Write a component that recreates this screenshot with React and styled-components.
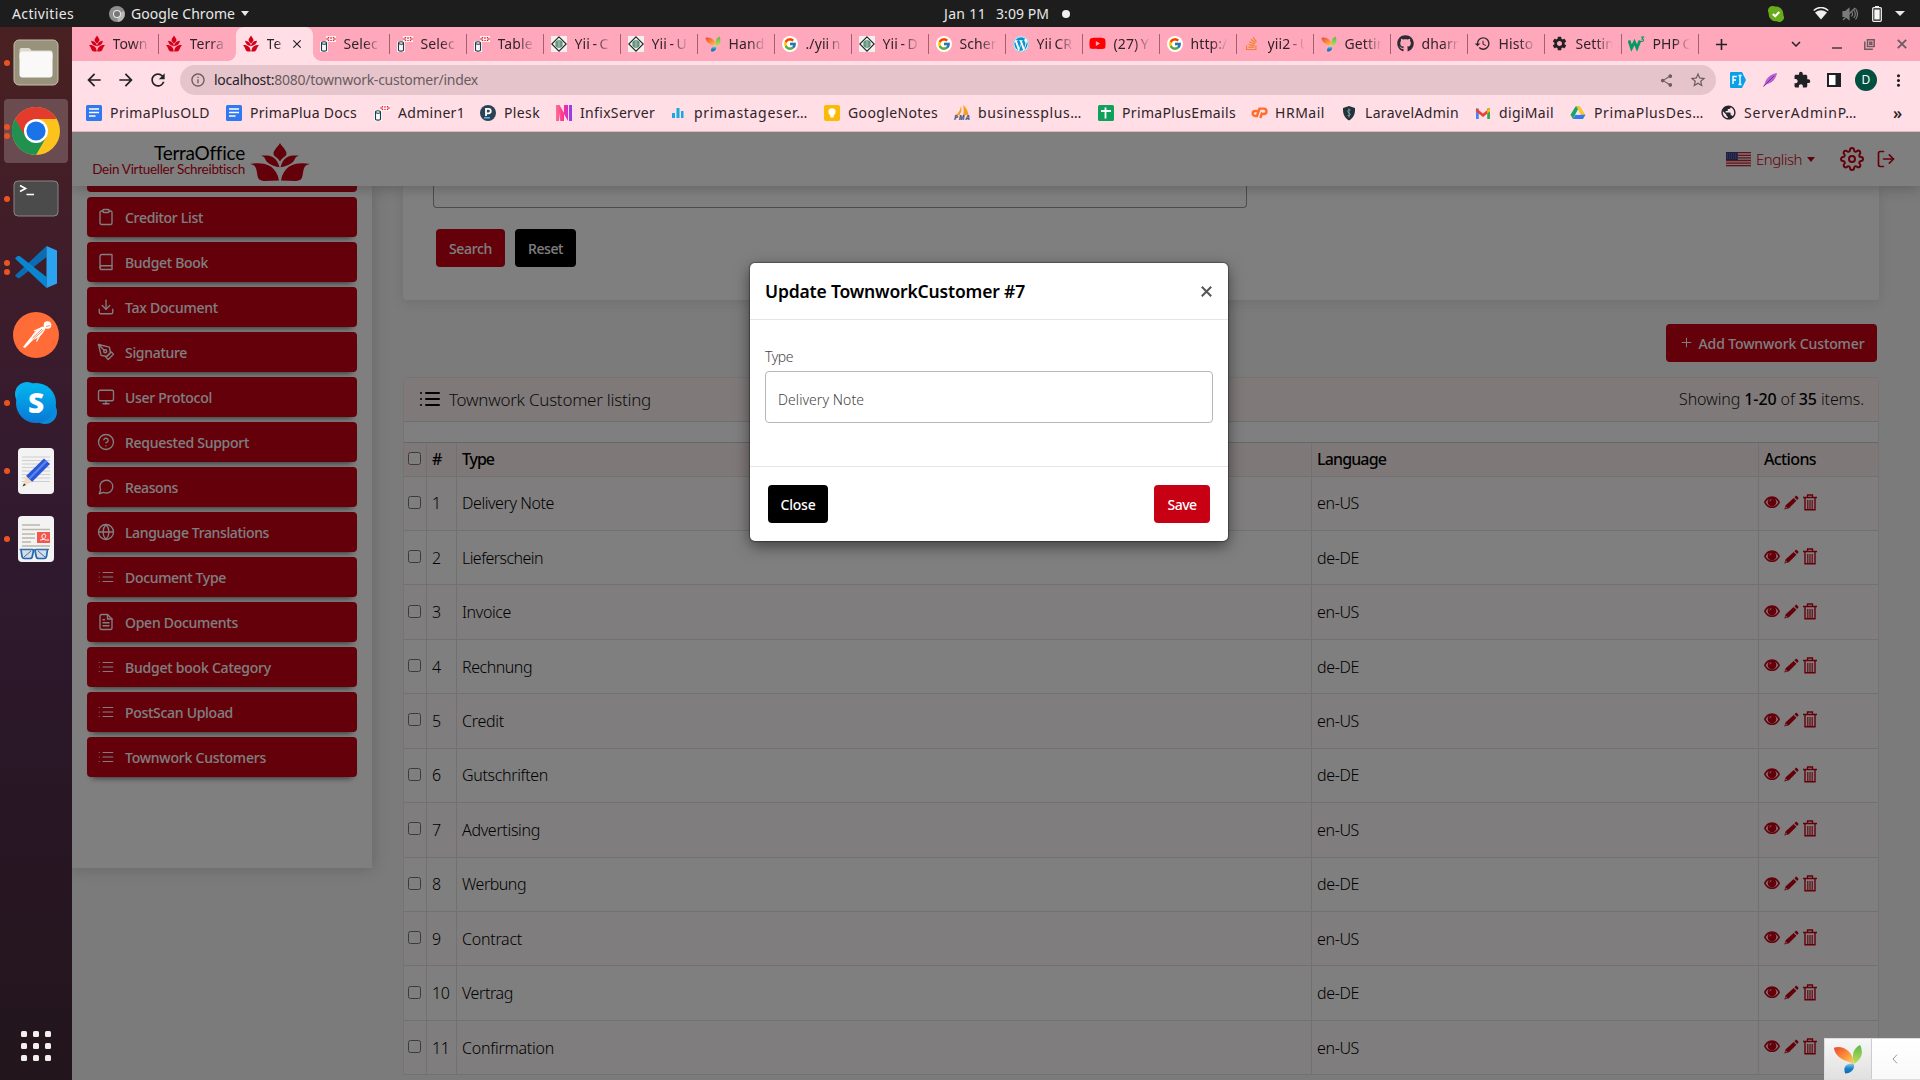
import React, { useLayoutEffect, useRef, useState } from "react";
import styled, { createGlobalStyle, css } from "styled-components";
import { FiClipboard, FiBook, FiDownload, FiPenTool, FiMonitor, FiHelpCircle, FiMessageCircle, FiGlobe, FiList, FiFileText, FiSettings, FiLogOut, FiPlus } from "react-icons/fi";
import { MdArrowBack, MdArrowForward, MdRefresh, MdInfoOutline, MdShare, MdStarBorder, MdExtension, MdMoreVert, MdHistory, MdSettings, MdPublic, MdAdd, MdClose, MdKeyboardArrowDown } from "react-icons/md";
import { FaWordpress, FaYoutube, FaStackOverflow, FaGithub } from "react-icons/fa";
import { FcGoogle } from "react-icons/fc";

const RED = "#c80014";
const LIGHT = "#ffdee6";
const UI = '"Noto Sans", "Open Sans", sans-serif';

const Global = createGlobalStyle`
  * { box-sizing: border-box; }
  html, body { margin: 0; height: 100%; overflow: hidden; }
  body { font-family: ${UI}; font-size: 14px; color: #000; }
  button { font-family: inherit; cursor: pointer; }
  svg { display: block; flex: none; }
`;

const FitSpan = styled.span`
  display: block;
  flex: none;
  white-space: pre;
  width: max-content;
`;
function Fit({ w, children, ...rest }) {
  const ref = useRef(null);
  const [spacing, setSpacing] = useState(0);
  useLayoutEffect(() => {
    const el = ref.current;
    el.style.letterSpacing = "0px";
    setSpacing((w - el.getBoundingClientRect().width) / el.textContent.length);
  }, [w]);
  return <FitSpan ref={ref} {...rest} style={{ letterSpacing: `${spacing}px` }}>{children}</FitSpan>;
}

/* ---------- desktop ---------- */
const Desktop = styled.div`
  width: 1920px;
  height: 1080px;
  display: flex;
  flex-direction: column;
  overflow: hidden;
`;
const TopBar = styled.header`
  height: 27px;
  flex: none;
  background: #1d1d1d;
  color: #e8e8e8;
  display: grid;
  grid-template-columns: 944px 1fr auto;
  align-items: center;
`;
const TopGroup = styled.div`
  display: flex;
  align-items: center;
  padding-left: ${(p) => p.$pl || 0}px;
  padding-right: ${(p) => p.$pr || 0}px;
  gap: ${(p) => p.$gap || 0}px;
  height: 27px;
`;
const Caret = styled.i`
  border: ${(p) => p.$s}px solid transparent;
  border-top: ${(p) => p.$h || p.$s}px solid currentColor;
  border-bottom: 0;
`;
const StatusDot = styled.i`
  width: 8px;
  height: 8px;
  border-radius: 50%;
  background: #f0f0f0;
`;
const Workspace = styled.div`
  flex: 1;
  display: flex;
  min-height: 0;
`;
const Dock = styled.nav`
  width: 72px;
  flex: none;
  display: flex;
  flex-direction: column;
  justify-content: space-between;
  padding: 4px 4px 16px;
  background: linear-gradient(#4a2122 0%, #401d29 20%, #361b2e 38%, #2f192e 52%, #281624 75%, #22151b 100%);
`;
const DockList = styled.div`
  display: grid;
  gap: 4px;
`;
const DockItem = styled.div`
  position: relative;
  height: 64px;
  border-radius: 4px;
  display: flex;
  align-items: center;
  justify-content: center;
  background: ${(p) => (p.$active ? "rgba(255,255,255,.2)" : "none")};
`;
const Running = styled.div`
  position: absolute;
  left: 0;
  top: 0;
  height: 100%;
  display: flex;
  flex-direction: column;
  justify-content: center;
  gap: 3px;
  i { width: 6px; height: 6px; border-radius: 50%; background: #ea5420; }
`;
const AppGrid = styled.div`
  display: grid;
  grid-template-columns: repeat(3, 6px);
  gap: 6px;
  justify-content: center;
  padding-bottom: 3px;
  i { height: 6px; border-radius: 1.5px; background: #f2f0ee; }
`;

/* ---------- browser ---------- */
const Browser = styled.div`
  flex: 1;
  min-width: 0;
  display: flex;
  flex-direction: column;
  background: ${LIGHT};
  color: #2f2429;
`;
const TabStrip = styled.div`
  height: 34px;
  flex: none;
  display: flex;
  background: #ffa8bc;
  padding-left: 9.5px;
`;
const Tab = styled.div`
  position: relative;
  width: 77px;
  flex: none;
  display: flex;
  align-items: center;
  padding: 0 0 1px 7px;
  gap: 8px;
  ${(p) => p.$sep && css`
    &::after { content: ""; position: absolute; right: 0; top: 7px; height: 20px; width: 1px; background: #a3606f; }
  `}
  ${(p) => p.$active && css`
    background: ${LIGHT};
    border-radius: 8px 8px 0 0;
    &::before, &::after {
      content: ""; position: absolute; bottom: 0; width: 8px; height: 8px;
      background: radial-gradient(circle at 0 0, transparent 7.5px, ${LIGHT} 8px);
    }
    &::before { left: -8px; }
    &::after { right: -8px; background: radial-gradient(circle at 100% 0, transparent 7.5px, ${LIGHT} 8px); }
  `}
`;
const TabLabel = styled.span`
  width: ${(p) => (p.$short ? 17 : 37)}px;
  overflow: hidden;
  white-space: nowrap;
  font-size: 14px;
  letter-spacing: 0.1px;
  word-spacing: -1.3px;
  mask-image: linear-gradient(90deg, #000 ${(p) => (p.$short ? 60 : 55)}%, transparent);
`;
const Slot = styled.div`
  width: ${(p) => p.$w || 32}px;
  flex: none;
  display: flex;
  align-items: center;
  justify-content: center;
  color: ${(p) => p.$c || "#202124"};
`;
const WindowControls = styled.div`
  margin-left: auto;
  padding-right: 1px;
  display: flex;
`;
const ChevronSlot = styled(Slot)`
  padding-right: 6px;
`;
const Toolbar = styled.div`
  height: 38px;
  flex: none;
  display: flex;
  align-items: center;
  padding-left: 6px;
`;
const Omnibox = styled.div`
  width: 1536px;
  height: 30px;
  margin: 0 6px;
  border-radius: 15px;
  background: #e5c5cb;
  display: flex;
  align-items: center;
  padding: 0 2px 0 10px;
  color: #6b5b60;
  b { font-weight: 400; color: #2a2226; }
  ${FitSpan} { margin: 0 auto 1px 8px; }
`;
const Avatar = styled.div`
  width: 22px;
  height: 22px;
  border-radius: 50%;
  background: #00503f;
  color: #fff;
  font-size: 12px;
  line-height: 22px;
  text-align: center;
`;
const Bookmarks = styled.div`
  height: 33px;
  flex: none;
  display: flex;
  padding: 0 0 5px 14px;
  border-bottom: 1px solid #e3b3bf;
`;
const Bookmark = styled.div`
  width: ${(p) => p.$w}px;
  flex: none;
  display: flex;
  align-items: center;
  gap: 8px;
`;
const MoreBookmarks = styled(Bookmark)`
  font-size: 16px;
  font-weight: 600;
`;

/* ---------- web page ---------- */
const Page = styled.div`
  position: relative;
  flex: 1;
  min-height: 0;
  overflow: hidden;
  display: flex;
  flex-direction: column;
  background: #f6f6f6;
  color: #111;
`;
const PageHeader = styled.div`
  position: relative;
  z-index: 1;
  height: 54px;
  flex: none;
  display: flex;
  align-items: center;
  background: #fff;
  box-shadow: 0 3px 12px rgba(70, 60, 60, 0.28);
  padding: 0 12px 0 20px;
  color: ${RED};
`;
const Brand = styled.div`
  width: 153px;
  display: flex;
  flex-direction: column;
  align-items: flex-end;
  font-family: Lato, sans-serif;
  margin-right: 5px;
  padding-top: 2px;
`;
const BrandName = styled.div`
  color: #000;
  font-size: 19px;
  line-height: 18px;
`;
const BrandLine = styled.div`
  font-size: 13.5px;
  line-height: 15px;
`;
const BrandMark = styled.div`
  padding-top: 5px;
`;
const HeaderTools = styled.div`
  margin-left: auto;
  display: flex;
  align-items: center;
  font-weight: 300;
  font-size: 15px;
`;
const Language = styled.div`
  display: flex;
  align-items: center;
  gap: 5px;
  margin-right: 25px;
`;
const PageBody = styled.div`
  flex: 1;
  min-height: 0;
  display: flex;
  align-items: flex-start;
`;
const Sidebar = styled.aside`
  width: 300px;
  height: 682px;
  flex: none;
  background: #fff;
  box-shadow: 0 0 14px rgba(80, 80, 80, 0.28);
  padding: 0 15px;
  margin-right: 31px;
  display: flex;
  flex-direction: column;
  gap: 5px;
`;
const MenuItem = styled.div`
  height: ${(p) => (p.$cut ? 6 : 40)}px;
  border-radius: ${(p) => (p.$cut ? "0 0 4px 4px" : "4px")};
  background: ${RED};
  color: #fff;
  display: flex;
  align-items: center;
  padding: ${(p) => (p.$cut ? 0 : "1px 10px 0")};
  gap: 10px;
  font-weight: 500;
  font-size: 14px;
  box-shadow: 0 6px 6px -5px rgba(0, 0, 0, 0.6);
  svg { margin-bottom: 1px; }
`;
const Main = styled.main`
  width: 1476px;
  display: flex;
  flex-direction: column;
`;
const SearchCard = styled.section`
  height: 114px;
  background: #fff;
  border-radius: 0 0 4px 4px;
  box-shadow: 0 2px 12px rgba(80, 80, 80, 0.14);
  padding: 0 30px;
`;
const SearchField = styled.div`
  width: 814px;
  height: 22px;
  border: 1px solid #999;
  border-top: 0;
  border-radius: 0 0 4px 4px;
`;
const ButtonRow = styled.div`
  display: flex;
  gap: 10px;
  padding: 21px 3px;
`;
const Button = styled.button`
  width: ${(p) => p.$w}px;
  height: 38px;
  border: 0;
  border-radius: 4px;
  padding: 1px 0 0;
  background: ${(p) => (p.$dark ? "#000" : RED)};
  color: #fff;
  font-weight: 500;
  font-size: 14px;
  display: flex;
  align-items: center;
  justify-content: center;
  gap: 5px;
  svg { margin-bottom: 2px; }
`;
const AddRow = styled.div`
  display: flex;
  justify-content: flex-end;
  padding: 24px 2px 15px;
`;
const Listing = styled.section`
  background: #fff;
  border: 1px solid #ebe8e8;
  border-width: 1px 1px 0;
  border-radius: 4px 4px 0 0;
`;
const ListingHead = styled.div`
  height: 44px;
  display: flex;
  align-items: center;
  justify-content: space-between;
  background: #fff3f2;
  border-bottom: 1px solid #dcdcdc;
  padding: 0 14px 1px 14px;
  font-weight: 300;
`;
const ListingTitle = styled.div`
  display: flex;
  align-items: center;
  gap: 7px;
  font-size: 17px;
  color: #16181b;
`;
const Summary = styled.div`
  font-size: 16px;
  color: #16181b;
  b { font-weight: 500; color: #000; }
`;
const Table = styled.div`
  margin-top: 20px;
  border-top: 1px solid #cfcfcf;
`;
const Row = styled.div`
  display: grid;
  grid-template-columns: 23px 30px 855px 447px 1fr;
  height: ${(p) => (p.$head ? 33.5 : 54.44)}px;
  background: ${(p) => (p.$head ? "#fff1f0" : p.$odd ? "#fffafa" : "#fff")};
  border-bottom: 1px solid #e4e1e1;
  font-size: 16px;
  font-weight: ${(p) => (p.$head ? 500 : 300)};
`;
const Cell = styled.div`
  display: flex;
  align-items: center;
  padding-left: ${(p) => (p.$check ? 4 : 5)}px;
  gap: 4px;
  color: ${RED};
  border-right: 1px solid #e4e1e1;
  &:last-child { border-right: 0; }
  svg { margin-bottom: 2px; }
  ${FitSpan} { color: #000; }
`;
const Check = styled.input`
  width: 13px;
  height: 13px;
  margin: 0 0 2px;
  flex: none;
`;
const Overlay = styled.div`
  position: absolute;
  inset: 0;
  z-index: 2;
  background: rgba(0, 0, 0, 0.5);
  display: flex;
  justify-content: center;
  align-items: flex-start;
  padding: 131px 14px 0 0;
`;
const Modal = styled.div`
  width: 478px;
  background: #fff;
  border-radius: 5px;
  box-shadow: 0 5px 15px rgba(0, 0, 0, 0.5), 0 0 1px 1px rgba(0, 0, 0, 0.3);
`;
const ModalHead = styled.div`
  height: 57px;
  display: flex;
  align-items: center;
  justify-content: space-between;
  padding: 0 16px 0 15px;
  border-bottom: 1px solid #e5e5e5;
  font-size: 17.5px;
  font-weight: 600;
  color: #000;
`;
const ModalBody = styled.div`
  height: 146px;
  padding: 27px 15px 0;
  font-weight: 300;
  font-size: 14px;
  color: #444;
`;
const Field = styled.div`
  margin-top: 5px;
  height: 52px;
  border: 1px solid #b7b7b7;
  border-radius: 4px;
  display: flex;
  align-items: center;
  padding: 4px 12px 0;
`;
const Label = styled.div`
  line-height: 19px;
  height: 19px;
`;
const ModalFoot = styled.div`
  height: 75px;
  border-top: 1px solid #e5e5e5;
  padding: 18px 18px;
  display: flex;
  justify-content: space-between;
`;
const DebugBar = styled.div`
  position: absolute;
  right: 0;
  bottom: 0;
  z-index: 3;
  width: 96px;
  height: 42px;
  display: grid;
  grid-template-columns: 46px 1px 48px;
  border: 1px solid #ddd;
  border-right: 0;
`;
const DebugCell = styled.div`
  display: flex;
  align-items: center;
  justify-content: center;
  padding-right: ${(p) => (p.$logo ? 1 : p.$line ? 0 : 3)}px;
  color: #999;
  background: ${(p) => (p.$logo ? "linear-gradient(#f7f7f7, #e0e0e0)" : p.$line ? "#ccc" : "linear-gradient(#fff, #f9f9f9)")};
`;

/* ---------- drawings ---------- */
const Tulip = ({ w = 16, h = 18, color = "#d4001a" }) => (
  <svg width={w} height={h} viewBox="0 0 60 39" preserveAspectRatio="none" fill={color}>
    <path d="M30 0C28 4 23.5 7 23.5 11c0 3 4 3 6.500 8 2.500-5 6.500-5 6.500-8C36.500 7 32 4 30 0z" />
    <path d="M11 13c6 0 15-2 18.500 12C22 24 16 20 15 16c-1-2-2-2.500-4-3zM49 13c-6 0-15-2-18.500 12C38 24 44 20 45 16c1-2 2-2.500 4-3z" />
    <path d="M0 21.500c13-2 26 0 29 17L14 39c-8 0-6-7-8-13-1-3-3-4-6-4.500zM60 21.500c-13-2-26 0-29 17L46 39c8 0 6-7 8-13 1-3 3-4 6-4.500z" />
  </svg>
);
const TabTulip = () => (
  <svg width="16" height="17" viewBox="0 0 32 39" preserveAspectRatio="none" fill="#d4001a">
    <path d="M16 1c-2 4-5 7-5 11 0 3 3 4 5 8 2-4 5-5 5-8 0-4-3-7-5-11z" />
    <path d="M4 13c7 0 11 5 12 12 1-7 5-12 12-12-1 7-5 11-12 13C9 24 5 20 4 13z" />
    <path d="M0 23c9-1 15 4 15.500 15H10C4 38 5 28 0 23zM32 23c-9-1-15 4-15.500 15H22c6 0 5-10 10-15z" />
  </svg>
);
const Adminer = () => (
  <svg width="16" height="16" viewBox="0 0 16 16" fill="none">
    <path d="M0 5.500h8V16H0zM6 0h10v6H6z" fill="#fff" opacity=".85" />
    <path d="M1.500 7v7c0 1.500 5 1.500 5 0V7M1.500 7c0-1.700 5-1.700 5 0s-5 1.500-5 0z" stroke="#13404d" strokeWidth="1.100" />
    <path d="M9 1.200L7 3l2 1.800M13 1.200L15 3l-2 1.800M11 1.200v1.500M11 4v1" stroke="#e3202a" strokeWidth="1.400" strokeDasharray="1.500 .5" />
  </svg>
);
const GuideIcon = () => (
  <svg width="16" height="16" viewBox="0 0 16 16">
    <rect width="16" height="16" fill="#f3f1ef" />
    <path d="M8 .8L15.200 8 8 15.200.8 8z" fill="none" stroke="#222" strokeWidth="1.100" />
    <circle cx="8" cy="8" r="3.700" fill="#3f7a62" />
    <path d="M4 8h8M8 4.500v7M5.500 6h5M5.500 10h5" stroke="#bcd8c9" strokeWidth=".7" />
  </svg>
);
const Yii = ({ s = 16 }) => (
  <svg width={s} height={s} viewBox="0 0 32 32">
    <defs>
      <linearGradient id="yo" x1="0" y1="0" x2="1" y2="1"><stop offset="0" stopColor="#f0442e" /><stop offset=".6" stopColor="#f99a3e" /><stop offset="1" stopColor="#fcd667" /></linearGradient>
      <linearGradient id="yg" x1="0" y1="0" x2="0" y2="1"><stop offset="0" stopColor="#57b947" /><stop offset="1" stopColor="#c4dd5c" /></linearGradient>
      <linearGradient id="yb" x1="0" y1="0" x2="0" y2="1"><stop offset="0" stopColor="#8ccbe8" /><stop offset=".5" stopColor="#1a82c8" /><stop offset="1" stopColor="#1068b0" /></linearGradient>
    </defs>
    <path d="M1 4c9-3 20 3 21.500 17C12 18 2 14 1 4z" fill="url(#yo)" />
    <path d="M29 1c3 7 3 14-6 20-4-9-1-17 6-20z" fill="url(#yg)" />
    <path d="M22 21c2 6-3 10-9 10.500C10 24 15 20 22 21z" fill="url(#yb)" />
  </svg>
);
const W3 = () => (
  <svg width="17" height="16" viewBox="0 0 17 16" fill="none" stroke="#059a63">
    <path d="M1 4.500l2.500 7.500L6.500 6l2.500 6 3-7.500" strokeWidth="2.800" />
    <path d="M13 1h2.500l-1.500 2c2.500 0 2 3-1 2.200" strokeWidth="1.100" />
  </svg>
);
const Docs = () => (
  <svg width="16" height="16" viewBox="0 0 16 16"><rect width="16" height="16" rx="1.500" fill="#3079f0" /><path d="M3 4h10M3 7.500h10M3 11h6.500" stroke="#fff" strokeWidth="1.700" /></svg>
);
const Plesk = () => (
  <svg width="16" height="16" viewBox="0 0 16 16"><circle cx="8" cy="8" r="8" fill="#2d4156" /><path d="M6 11V3.800h2.500a2.200 2.200 0 0 1 0 4.500H6" fill="none" stroke="#fff" strokeWidth="1.800" /><path d="M4 12.800h6" stroke="#3db8e8" strokeWidth="1.600" /></svg>
);
const Infix = () => (
  <svg width="16" height="16" viewBox="0 0 16 16"><defs><linearGradient id="ix"><stop offset="0" stopColor="#ff6f91" /><stop offset=".5" stopColor="#ff2e93" /><stop offset="1" stopColor="#8a3ffc" /></linearGradient></defs><path d="M0 0h3.500l4.500 8V0H12v16l-4-7v7H4.200L3 8v8H0zM13 0h3v16h-3z" fill="url(#ix)" /></svg>
);
const Bars = () => (
  <svg width="16" height="16" viewBox="0 0 16 16" fill="#19a9de"><path d="M2 8h3v5H2zM6.500 3h3v10h-3zM11 6h2.500v7H11z" /></svg>
);
const Keep = () => (
  <svg width="16" height="16" viewBox="0 0 16 16"><rect width="16" height="16" rx="2" fill="#fbb908" /><circle cx="8" cy="6.800" r="3.600" fill="#fff" /><path d="M6.300 9h3.400v3.500H6.300z" fill="#fff" /></svg>
);
const Pma = () => (
  <svg width="16" height="17" viewBox="0 0 16 17"><path d="M7 2c1 4 0 7-1.500 9H1c3-1 5-4 6-9zM9 1c4 3 5 7 5.500 10H9c1-3 1-6 0-10z" fill="#f89c1c" /><text x="0" y="16" fontSize="6.500" fontWeight="800" fontStyle="italic" fontFamily="Open Sans, sans-serif" fill="#4b5a86" textLength="16">PMA</text></svg>
);
const Sheets = () => (
  <svg width="16" height="16" viewBox="0 0 16 16"><rect width="16" height="16" rx="1.500" fill="#0fa15c" /><path d="M3 6h10M7.500 2.500v11" stroke="#fff" strokeWidth="1.800" /></svg>
);
const CPanel = () => (
  <svg width="17" height="12" viewBox="0 0 17 12" fill="none" stroke="#ff6c2c" strokeWidth="2.400"><path d="M7.500 4H4.200a2.500 2.500 0 0 0 0 5H6L8.500 1.600h4.300a2.700 2.700 0 0 1 0 5.400h-2.600M9.300 11l1.900-5.500" /></svg>
);
const Shield = () => (
  <svg width="16" height="16" viewBox="0 0 16 16"><path d="M8 1l6 2c.3 6-1.500 10-6 12.500C3.500 13 1.700 9 2 3z" fill="#22333b" /><path d="M9.500 5c-3-.8-3.500 2-1.500 3s1.500 3.500-1.500 2.500M8 3.500v9" stroke="#8fa6a5" fill="none" strokeWidth=".9" /></svg>
);
const Gmail = () => (
  <svg width="16" height="16" viewBox="0 0 16 16"><path d="M1 3.500h2.800V14H1z" fill="#4285f4" /><path d="M12.200 3.500H15V14h-2.800z" fill="#34a853" /><path d="M1 3l7 5.500L15 3v3.500L8 12 1 6.500z" fill="#ea4335" /><path d="M12.200 5L15 3v3.500l-2.800 2z" fill="#fbbc04" /></svg>
);
const Drive = () => (
  <svg width="16" height="16" viewBox="0 0 16 16"><path d="M5.500 1.500h4L5 10l-2 4L.5 9.800z" fill="#16a765" /><path d="M6.500 1.500h3.500L15.500 10h-4.500z" fill="#fcc42b" /><path d="M5.500 9.800h10L13 14H3z" fill="#2f7bf0" /><path d="M8 5.500l2.500 4.300h-5z" fill="#ffdee6" /></svg>
);
const Flag = () => (
  <svg width="25" height="15" viewBox="0 0 25 15"><rect width="25" height="15" fill="#eee" /><path d="M0 .7h25M0 3.300h25M0 5.900h25M0 8.500h25M0 11.100h25M0 13.700h25" stroke="#cc2030" strokeWidth="1.300" /><rect width="12" height="8" fill="#3d3f86" /><path d="M1 2h11M1 4h11M1 6h11" stroke="#9a9bd0" strokeWidth=".8" strokeDasharray="1 1" /></svg>
);
const Eye = () => (
  <svg width="16" height="13" viewBox="0 0 16 13"><path fillRule="evenodd" d="M8 .3c4 0 6.700 3 8 5.900-1.500 3.300-4.300 5.900-8 5.900S1.500 9.500 0 6.200C1.300 3.300 4 .3 8 .3zM1.800 6.300C3 8.700 5.200 10.500 8 10.500s5-1.800 6.200-4.200c-.7-1.500-1.700-2.700-3-3.400a4.400 4.400 0 1 1-6.400 0c-1.300.7-2.300 1.900-3 3.400zM7 3.200C5.800 3.600 5.200 4.900 5.700 6c.2-1.200.8-1.900 2-2.100z" fill="currentColor" /></svg>
);
const Pencil = () => (
  <svg width="15" height="15" viewBox="0 0 16 15" fill="currentColor"><path d="M12.200.8c.6-.6 1.300-.4 1.800.1l1 1c.6.6.6 1.200.1 1.700L14 4.700 11.100 1.800zM10.300 2.600l2.900 2.900-8 8L.3 15l1.500-4.600zM2 12l-.6 1.900L3.300 13.300z" /></svg>
);
const Trash = () => (
  <svg width="14" height="17" viewBox="0 0 14 17" fill="none" stroke="currentColor"><path d="M0 3.500h14" strokeWidth="1.500" /><path d="M4.500 3V1h5v2" strokeWidth="1.300" /><path d="M2 4v11.800h10V4" strokeWidth="1.400" /><path d="M4.800 6v9M7 6v9M9.200 6v9" strokeWidth="1.100" /></svg>
);

const DockFiles = () => (
  <svg width="46" height="48" viewBox="0 0 46 48"><rect x="1" y="1" width="44" height="45" rx="5" fill="#98917b" stroke="#c7c0a8" /><path d="M6.500 11q0-2 2-2h7q2 0 3 2.500h19q2 0 2 2V20h-33z" fill="#dedacd" /><rect x="6.500" y="12.500" width="33" height="26" rx="3" fill="#faf9f8" /></svg>
);
const DockChrome = () => (
  <svg width="48" height="48" viewBox="0 0 48 48"><circle cx="24" cy="24" r="24" fill="#fcc31c" /><path d="M3.200 12A24 24 0 0 0 24 48l10.400-18L24 24z" fill="#219150" /><path d="M3.200 12A24 24 0 0 1 44.800 12H24L13.600 30z" fill="#e33b2e" /><circle cx="24" cy="24" r="12" fill="#fff" /><circle cx="24" cy="24" r="9.600" fill="#1a73e8" /></svg>
);
const DockTerminal = () => (
  <svg width="46" height="38" viewBox="0 0 46 38"><rect x="1" y="1" width="44" height="35" rx="4" fill="#4b4b4b" stroke="#8b8487" /><path d="M7 5.500l5.500 3L7 11.500M13.500 14.500H21" fill="none" stroke="#fff" strokeWidth="1.700" /></svg>
);
const DockCode = () => (
  <svg width="42" height="42" viewBox="0 0 42 42"><path d="M31.500 0L0 29.500l2 2q1.500 1.300 3 .2L31.500 11z" fill="#0b6cb3" /><path d="M31.500 42L0 12.500l2-2q1.500-1.300 3-.2L31.500 31z" fill="#0a86d1" /><path d="M31.500 0l10.500 4.500v33L31.500 42z" fill="#2aa3f0" /></svg>
);
const DockPostman = () => (
  <svg width="46" height="46" viewBox="0 0 46 46">
    <circle cx="23" cy="23" r="23" fill="#ff6c37" />
    <circle cx="34.500" cy="13" r="3.800" fill="#fff" />
    <path d="M31 14.500c-5 1-10.500 6-13.500 11.500l3.500 1.500c5-2 9.500-6 11.500-11z" fill="#fff" />
    <path d="M17.500 25.500L10 35l2 1 8.500-8.500z" fill="#fff" />
    <path d="M30 15l-9 4M27.500 22l-4 7.500" stroke="#fff" strokeWidth="1.300" />
    <path d="M19.500 26l9.500-9M21 26.500l9.500-8.500M33 14.500l4-1" stroke="#ff6c37" strokeWidth=".8" />
  </svg>
);
const DockSkype = () => (
  <svg width="42" height="42" viewBox="0 0 42 42"><defs><linearGradient id="sk" x1="0" y1="0" x2="0" y2="1"><stop offset="0" stopColor="#00b7f0" /><stop offset="1" stopColor="#0a78d4" /></linearGradient></defs><circle cx="12" cy="12" r="12" fill="#0aaeec" /><circle cx="30" cy="30" r="12" fill="#0c8bdc" /><circle cx="21" cy="21" r="20" fill="url(#sk)" /><text x="21" y="31" textAnchor="middle" fontFamily="Open Sans, sans-serif" fontWeight="800" fontSize="28" fill="#fff">S</text></svg>
);
const DockEditor = () => (
  <svg width="36" height="46" viewBox="0 0 36 46"><rect width="36" height="46" rx="4" fill="#f3f3f3" /><path d="M4 9h28M4 12.500h28M4 16h28M4 19.500h28M4 23h28M4 26.500h28M4 30h28M4 33.500h28" stroke="#cfcfcf" /><path d="M26 10.500l6 5.500-18 18-6-6z" fill="#2a56d8" /><path d="M28.500 13L11 31" stroke="#5b86f2" strokeWidth="2" /><path d="M8 28l6 6-9 4z" fill="#f3d9bd" /><path d="M6 35.500L8 37l-3.500 1.500z" fill="#333" /></svg>
);
const DockReader = () => (
  <svg width="36" height="46" viewBox="0 0 36 46">
    <rect width="36" height="46" rx="4" fill="#f3f3f3" />
    <path d="M4 9h18M4 13.500h28M4 18h13M4 22h13M4 26h9M4 30h28" stroke="#bdb7a8" strokeWidth="1.700" />
    <rect x="19" y="16" width="13" height="11" fill="#f2564f" />
    <path d="M22 24c6 0 7-6 4-6s-4 7 5 6" stroke="#fff" fill="none" />
    <path d="M3 33.500h11.500q1 0 .8 2l-1 5q-.4 2-2.500 2H6.500q-2 0-2.500-2zM29.500 33.500H18q-1 0-.8 2l1 5q.4 2 2.500 2H26q2 0 2.500-2z" fill="#d5dde6" stroke="#2468b0" strokeWidth="1.700" />
    <path d="M1.500 33.500h29.500M6 41l7-6M20 35l7 6" stroke="#3d6ea8" strokeWidth="1" />
  </svg>
);

/* ---------- data ---------- */
const Disc = styled.span`
  width: 16px;
  height: 16px;
  border-radius: 50%;
  background: #fff;
  display: flex;
  align-items: center;
  justify-content: center;
  flex: none;
`;
const GIcon = () => <Disc><FcGoogle size={14} /></Disc>;
const WpIcon = () => <Disc><FaWordpress size={16} color="#0a93c8" /></Disc>;
const TABS = [
  ["Town", <TabTulip />], ["Terra", <TabTulip />], ["Te", <TabTulip />],
  ["Selec", <Adminer />], ["Selec", <Adminer />], ["Table", <Adminer />],
  ["Yii - C", <GuideIcon />], ["Yii - U", <GuideIcon />], ["Hand", <Yii />],
  ["./yii n", <GIcon />], ["Yii - D", <GuideIcon />], ["Scher", <GIcon />],
  ["Yii CR", <WpIcon />], ["(27) Y", <FaYoutube size={17} color="#f00" />],
  ["http:/", <GIcon />], ["yii2 - U", <FaStackOverflow size={15} color="#f48024" />],
  ["Gettin", <Yii />], ["dharr", <FaGithub size={17} color="#2b2b33" />], ["Histo", <MdHistory size={17} color="#33292d" />],
  ["Settin", <MdSettings size={17} color="#222" />], ["PHP C", <W3 />],
];
const BOOKMARKS = [
  ["PrimaPlusOLD", 100, 140, <Docs />], ["PrimaPlua Docs", 107, 148, <Docs />], ["Adminer1", 67, 106, <Adminer />],
  ["Plesk", 36, 76, <Plesk />], ["InfixServer", 75, 114, <Infix />], ["primastageser…", 114, 154, <Bars />],
  ["GoogleNotes", 90, 130, <Keep />], ["businessplus…", 104, 144, <Pma />], ["PrimaPlusEmails", 114, 153, <Sheets />],
  ["HRMail", 50, 90, <CPanel />], ["LaravelAdmin", 94, 134, <Shield />], ["digiMail", 55, 95, <Gmail />],
  ["PrimaPlusDes…", 110, 150, <Drive />], ["ServerAdminP…", 113, 173, <MdPublic size={17} color="#22252b" />],
];
const MENU = [
  ["Creditor List", 78, FiClipboard], ["Budget Book", 83, FiBook], ["Tax Document", 93, FiDownload], ["Signature", 62, FiPenTool],
  ["User Protocol", 87, FiMonitor], ["Requested Support", 124, FiHelpCircle], ["Reasons", 53, FiMessageCircle],
  ["Language Translations", 144, FiGlobe], ["Document Type", 101, FiList], ["Open Documents", 113, FiFileText],
  ["Budget book Category", 146, FiList], ["PostScan Upload", 108, FiList], ["Townwork Customers", 141, FiList],
];
const ROWS = [
  ["Delivery Note", 92], ["Lieferschein", 81], ["Invoice", 49], ["Rechnung", 70], ["Credit", 42], ["Gutschriften", 86],
  ["Advertising", 78], ["Werbung", 64], ["Contract", 60], ["Vertrag", 51], ["Confirmation", 92],
];
const DOCK = [
  [<DockFiles />, 1], [<DockChrome />, 2], [<DockTerminal />, 1], [<DockCode />, 2],
  [<DockPostman />, 0], [<DockSkype />, 1], [<DockEditor />, 1], [<DockReader />, 1],
];

export default function App() {
  return (
    <Desktop>
      <Global />
      <TopBar>
        <TopGroup $pl={12}>
          <Fit w={62}>Activities</Fit>
          <TopGroup $pl={35} $gap={6}>
            <svg width="16" height="16" viewBox="0 0 16 16"><circle cx="8" cy="8" r="8" fill="#8e8e8e" /><path d="M8 8L15 5A8 8 0 0 1 9 16z" fill="#b8b8b8" /><circle cx="8" cy="8" r="4" fill="#e9e9e9" /><circle cx="8" cy="8" r="3" fill="#777" /></svg>
            <Fit w={104}>Google Chrome</Fit>
            <Caret $s={4.5} $h={5} />
          </TopGroup>
        </TopGroup>
        <TopGroup>
          <Fit w={42}>Jan 11</Fit>
          <TopGroup $pl={10} $gap={13}><Fit w={53}>3:09 PM</Fit><StatusDot /></TopGroup>
        </TopGroup>
        <TopGroup $pr={15} $gap={13}>
          <svg width="16" height="16" viewBox="0 0 16 16"><path d="M4 0a5 5 0 0 1 3 .6A7.500 7.500 0 0 1 15.300 9 4.600 4.600 0 0 1 9 15.300 7.500 7.500 0 0 1 .7 7 4.600 4.600 0 0 1 4 0z" fill="#68ab1b" /><path d="M4.800 8l2.300 2.300L11.300 6" fill="none" stroke="#fff" strokeWidth="2" /></svg>
          <TopGroup $pl={16}>
            <svg width="16" height="13" viewBox="0 0 16 13"><path d="M.7 3.500q7.300-6 14.600 0" fill="none" stroke="#eee" strokeWidth="1.500" /><path d="M2 5.500q6-4.500 12 0L8 12.500z" fill="#eee" /></svg>
          </TopGroup>
          <svg width="16" height="14" viewBox="0 0 16 14" stroke="#7b7b7b" fill="none" strokeWidth="1.200"><path d="M1 4.500h2.500L7 1.500v11L3.500 9.500H1z" fill="#7b7b7b" /><path d="M9.500 4.500q2 2.500 0 5M11.800 3q3 4 0 8M13.500 1.500q4 5.500 0 11M1 13L13 1" /></svg>
          <TopGroup $gap={12}>
            <svg width="12" height="16" viewBox="0 0 12 16"><path d="M4 0h4v2H4z" fill="#eee" /><rect x="1.700" y="1.700" width="8.600" height="13.600" rx="1" fill="none" stroke="#eee" strokeWidth="1.300" /><rect x="3.300" y="3.500" width="5.400" height="10" fill="#f4f4f4" /></svg>
            <Caret $s={5} />
          </TopGroup>
        </TopGroup>
      </TopBar>
      <Workspace>
        <Dock>
          <DockList>
            {DOCK.map(([icon, n], i) => (
              <DockItem key={i} $active={i === 1}>
                <Running>{Array.from({ length: n }, (_, k) => <i key={k} />)}</Running>
                {icon}
              </DockItem>
            ))}
          </DockList>
          <AppGrid>{Array.from({ length: 9 }, (_, k) => <i key={k} />)}</AppGrid>
        </Dock>
        <Browser>
          <TabStrip>
            {TABS.map(([t, icon], i) => (
              <Tab key={i} $active={i === 2} $sep={i !== 1 && i !== 2}>
                <Slot $w={16}>{icon}</Slot>
                <TabLabel $short={i === 2}>{t}</TabLabel>
                {i === 2 && <Slot $w={10}><MdClose size={14} /></Slot>}
              </Tab>
            ))}
            <Slot $w={45}><MdAdd size={19} /></Slot>
            <WindowControls>
              <ChevronSlot $w={44}><MdKeyboardArrowDown size={18} /></ChevronSlot>
              <Slot $c="#6b5b60"><svg width="10" height="12" viewBox="0 0 10 12"><path d="M0 10h10" stroke="currentColor" strokeWidth="2" /></svg></Slot>
              <Slot $c="#6b5b60"><svg width="11" height="11" viewBox="0 0 11 11" fill="none" stroke="currentColor" strokeWidth="1.500"><path d="M3.500.8h6.700v6.700H3.500zM5.800 3.200h2v2h-2zM.8 2.500v7.700h8" /></svg></Slot>
              <Slot $w={34} $c="#6b5b60"><svg width="10" height="10" viewBox="0 0 10 10"><path d="M.8.8l8.400 8.400M9.200.8L.8 9.200" stroke="currentColor" strokeWidth="1.800" /></svg></Slot>
            </WindowControls>
          </TabStrip>
          <Toolbar>
            <Slot><MdArrowBack size={20} /></Slot>
            <Slot><MdArrowForward size={20} /></Slot>
            <Slot><MdRefresh size={20} /></Slot>
            <Omnibox>
              <MdInfoOutline size={16} />
              <Fit w={264}><b>localhost:</b>8080/townwork-customer/index</Fit>
              <Slot $c="#6b5b60"><MdShare size={15} /></Slot>
              <Slot $c="#6b5b60"><MdStarBorder size={18} /></Slot>
            </Omnibox>
            <Slot><svg width="16" height="16" viewBox="0 0 16 16"><path d="M1 0h11l4 8-4 8H1q-1 0-1-1V1q0-1 1-1z" fill="#0aa0e8" /><path d="M3 12V4.500h3.800M3 8h3M10 3.500v9M8.500 3.500h3M8.500 12.500h3" stroke="#fff" strokeWidth="1.400" fill="none" /></svg></Slot>
            <Slot><svg width="16" height="16" viewBox="0 0 16 16"><path d="M15 1C9 2 4 6 3 11l-2 4 4-3c5-1 9-5 10-11z" fill="#b65fd0" /><path d="M1.500 14.500L12 4" stroke="#6a2a92" strokeWidth=".9" /></svg></Slot>
            <Slot><MdExtension size={18} /></Slot>
            <Slot><svg width="14" height="14" viewBox="0 0 14 14"><rect x="1" y="1" width="12" height="12" fill="#fff" stroke="#202124" strokeWidth="2" /><path d="M8.500 1h4.500v12H8.500z" fill="#202124" /></svg></Slot>
            <Slot><Avatar>D</Avatar></Slot>
            <Slot><MdMoreVert size={19} /></Slot>
          </Toolbar>
          <Bookmarks>
            {BOOKMARKS.map(([t, w, total, icon]) => (
              <Bookmark key={t} $w={total}><Slot $w={16}>{icon}</Slot><Fit w={w}>{t}</Fit></Bookmark>
            ))}
            <MoreBookmarks $w={10}>»</MoreBookmarks>
          </Bookmarks>

          <Page>
            <PageHeader>
              <Brand>
                <BrandName><Fit w={90}>TerraOffice</Fit></BrandName>
                <BrandLine><Fit w={153}>Dein Virtueller Schreibtisch</Fit></BrandLine>
              </Brand>
              <BrandMark><Tulip w={60} h={38} color={RED} /></BrandMark>
              <HeaderTools>
                <Language><Flag /><Fit w={46}>English</Fit><Caret $s={4} $h={5} /></Language>
                <FiSettings size={24} />
                <Slot $w={44} $c={RED}><FiLogOut size={20} /></Slot>
              </HeaderTools>
            </PageHeader>
            <PageBody>
              <Sidebar>
                <MenuItem $cut />
                {MENU.map(([t, w, Icon]) => (
                  <MenuItem key={t}><Icon size={18} strokeWidth={Icon === FiList ? 1.5 : 1.8} /><Fit w={w}>{t}</Fit></MenuItem>
                ))}
              </Sidebar>
              <Main>
                <SearchCard>
                  <SearchField />
                  <ButtonRow>
                    <Button $w={69}><Fit w={43}>Search</Fit></Button>
                    <Button $w={61} $dark><Fit w={35}>Reset</Fit></Button>
                  </ButtonRow>
                </SearchCard>
                <AddRow>
                  <Button $w={211}><FiPlus size={15} strokeWidth={1.6} /><Fit w={166}>Add Townwork Customer</Fit></Button>
                </AddRow>
                <Listing>
                  <ListingHead>
                    <ListingTitle><FiList size={24} color="#000" /><Fit w={202}>Townwork Customer listing</Fit></ListingTitle>
                    <Summary><Fit w={185}>Showing <b>1-20</b> of <b>35</b> items.</Fit></Summary>
                  </ListingHead>
                  <Table>
                    <Row $head>
                      <Cell $check><Check type="checkbox" readOnly /></Cell>
                      <Cell><Fit w={9}>#</Fit></Cell>
                      <Cell><Fit w={32}>Type</Fit></Cell>
                      <Cell><Fit w={69}>Language</Fit></Cell>
                      <Cell><Fit w={52}>Actions</Fit></Cell>
                    </Row>
                    {ROWS.map(([t, w], i) => (
                      <Row key={t} $odd={i % 2 === 0}>
                        <Cell $check><Check type="checkbox" readOnly /></Cell>
                        <Cell><Fit w={i > 8 ? 17.5 : 9}>{i + 1}</Fit></Cell>
                        <Cell><Fit w={w}>{t}</Fit></Cell>
                        <Cell><Fit w={42}>{i % 2 ? "de-DE" : "en-US"}</Fit></Cell>
                        <Cell><Eye /><Pencil /><Trash /></Cell>
                      </Row>
                    ))}
                  </Table>
                </Listing>
              </Main>
            </PageBody>
            <Overlay>
              <Modal>
                <ModalHead>
                  <Fit w={260}>Update TownworkCustomer #7</Fit>
                  <svg width="11" height="11" viewBox="0 0 11 11"><path d="M.8.8l9.400 9.400M10.200.8L.8 10.200" stroke="#555" strokeWidth="2" /></svg>
                </ModalHead>
                <ModalBody>
                  <Label><Fit w={28}>Type</Fit></Label>
                  <Field><Fit w={86}>Delivery Note</Fit></Field>
                </ModalBody>
                <ModalFoot>
                  <Button $w={60} $dark><Fit w={35}>Close</Fit></Button>
                  <Button $w={56}><Fit w={29}>Save</Fit></Button>
                </ModalFoot>
              </Modal>
            </Overlay>
            <DebugBar>
              <DebugCell $logo><Yii s={30} /></DebugCell>
              <DebugCell $line />
              <DebugCell><svg width="6" height="10" viewBox="0 0 6 10"><path d="M5 .7L1 5l4 4.300" fill="none" stroke="currentColor" /></svg></DebugCell>
            </DebugBar>
          </Page>
        </Browser>
      </Workspace>
    </Desktop>
  );
}
